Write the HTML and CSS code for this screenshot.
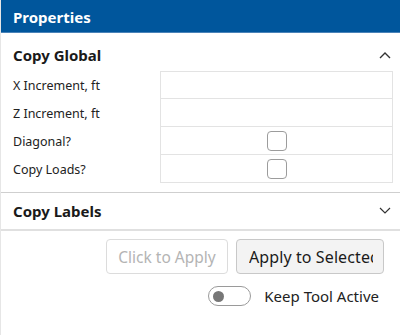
FILE: index.html
```html
<!DOCTYPE html>
<html lang="en">
<head>
    <meta charset="UTF-8">
    <title>Properties</title>
    <link rel="stylesheet" href="styles.css">
</head>
<body>
    <div class="panel">
        <div class="title">Properties</div>

        <div class="section-head open">
            <span>Copy Global</span>
            <svg class="chev" width="12" height="8" viewBox="0 0 12 8"><path d="M1 7 L6 2 L11 7" fill="none" stroke="#333" stroke-width="1.4"/></svg>
        </div>
        <div class="fields">
            <div class="label">X Increment, ft</div>
            <div class="cell"></div>
            <div class="label">Z Increment, ft</div>
            <div class="cell"></div>
            <div class="label">Diagonal?</div>
            <div class="cell"><span class="check"></span></div>
            <div class="label">Copy Loads?</div>
            <div class="cell"><span class="check"></span></div>
        </div>

        <div class="section-head closed">
            <span>Copy Labels</span>
            <svg class="chev" width="12" height="8" viewBox="0 0 12 8"><path d="M1 1 L6 6 L11 1" fill="none" stroke="#333" stroke-width="1.2"/></svg>
        </div>

        <div class="actions">
            <button class="btn" disabled>Click to Apply</button>
            <button class="btn primary"><span class="btn-text">Apply to Selected</span></button>
        </div>
        <div class="toggle-row">
            <span class="toggle"><span class="knob"></span></span>
            <span>Keep Tool Active</span>
        </div>
    </div>
</body>
</html>
```
FILE: styles.css
```css
body {
    margin: 0;
    font-family: "Noto Sans", "Open Sans", sans-serif;
    background: #fff;
    color: #222;
}
.panel {
    width: 400px;
    height: 335px;
    border-left: 1px solid #e6e6e6;
    box-sizing: border-box;
}
.title {
    background: #00569c;
    color: #fff;
    font-weight: bold;
    font-size: 15px;
    height: 33px;
    line-height: 34px;
    padding-left: 12px;
    border-bottom: 1px solid #4a83b8;
    box-sizing: border-box;
}
.section-head {
    display: flex;
    justify-content: space-between;
    align-items: center;
    height: 38px;
    padding: 0 9px 0 12px;
    font-size: 15px;
    font-weight: bold;
    color: #1a1a1a;
}
.section-head.open {
    padding-top: 5px;
    height: 33px;
}
.section-head.closed {
    border-top: 1px solid #cfcfcf;
    border-bottom: 2px solid #e0e0e0;
    height: 36px;
}
.fields {
    display: grid;
    grid-template-columns: 147px 233px;
    grid-auto-rows: 28px;
    padding-left: 12px;
    margin-bottom: 9px;
}
.label {
    font-size: 12.5px;
    display: flex;
    align-items: center;
    color: #222;
}
.cell {
    border: 1px solid #e3e3e3;
    border-top: none;
    display: flex;
    align-items: center;
    justify-content: center;
}
.cell:nth-child(2) {
    border-top: 1px solid #e3e3e3;
}
.check {
    width: 18px;
    height: 18px;
    border: 1.5px solid #9c9c9c;
    border-radius: 4px;
}
.actions {
    display: flex;
    justify-content: flex-end;
    gap: 8px;
    padding: 8px 16px 0 0;
}
.btn {
    font-family: inherit;
    font-size: 15.5px;
    height: 35px;
    border-radius: 4px;
    padding: 0 10px;
    white-space: nowrap;
}
.btn[disabled] {
    width: 122px;
    background: #fff;
    border: 1px solid #dcdcdc;
    color: #b4b4b4;
}
.btn.primary {
    width: 148px;
    background: #f3f3f3;
    border: 1px solid #c8c8c8;
    color: #1a1a1a;
    padding: 0 10px 0 12px;
    font-size: 16px;
    letter-spacing: 0.1px;
}
.btn-text {
    display: block;
    overflow: hidden;
    text-align: left;
}
.toggle-row {
    display: flex;
    justify-content: flex-end;
    align-items: center;
    gap: 13px;
    padding: 12px 21px 0 0;
    font-size: 15px;
    color: #222;
}
.toggle {
    width: 37px;
    height: 18px;
    border: 1.5px solid #9a9a9a;
    border-radius: 11px;
    display: flex;
    align-items: center;
    padding-left: 4px;
    box-sizing: content-box;
}
.knob {
    width: 11px;
    height: 11px;
    border-radius: 50%;
    background: #777;
}
```
